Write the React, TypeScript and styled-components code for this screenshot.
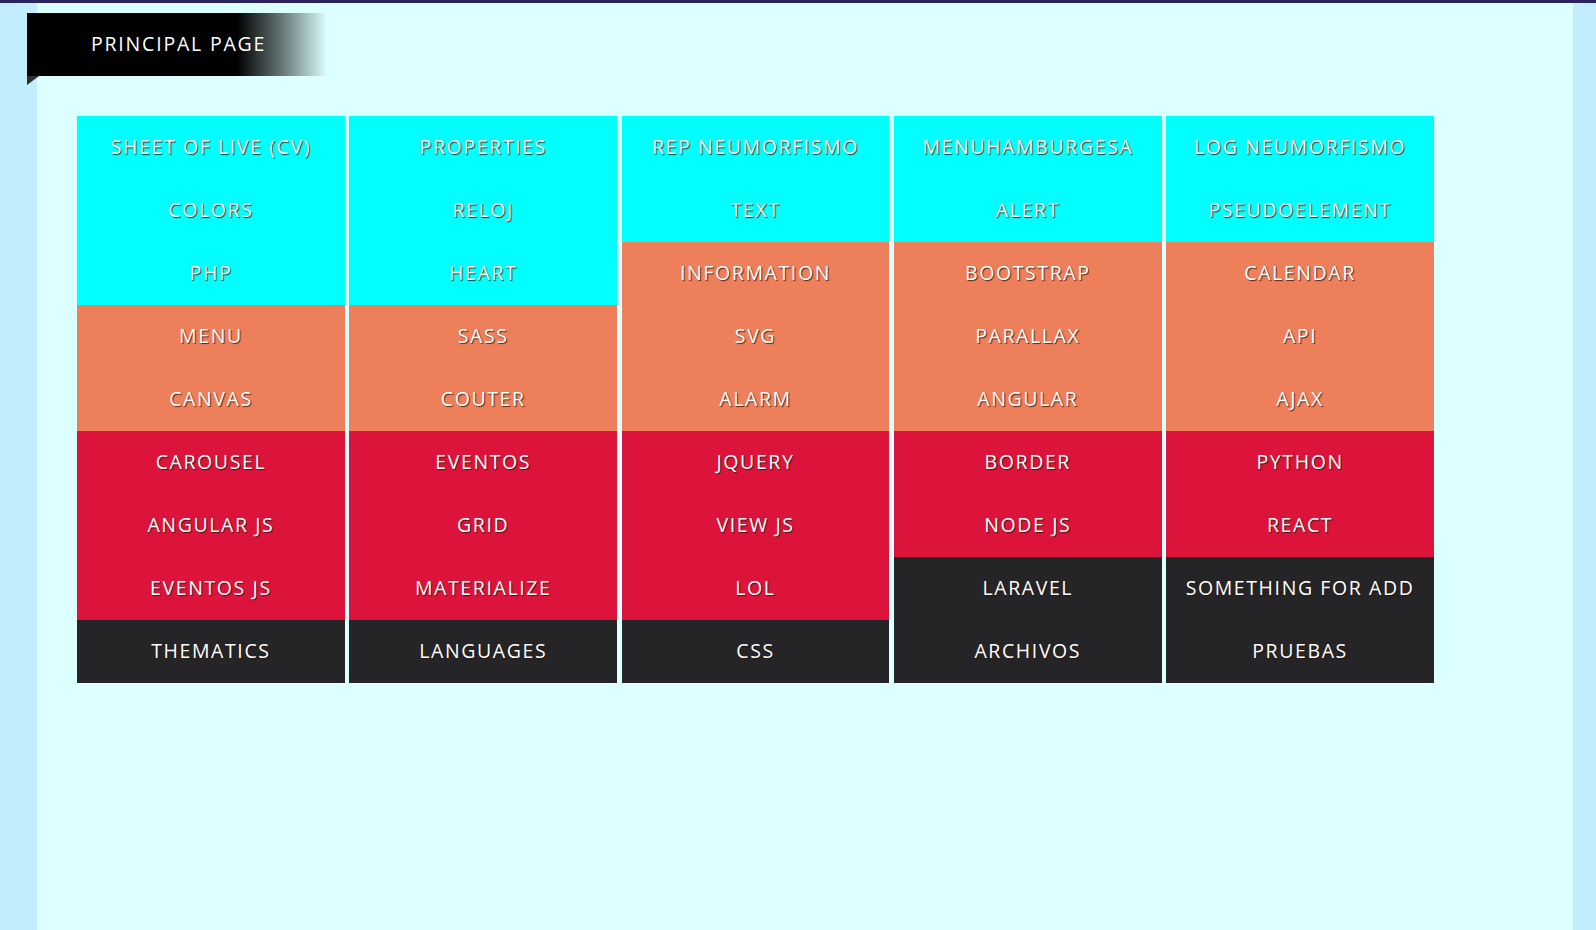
import React from "react";
import styled, { createGlobalStyle } from "styled-components";

const Global = createGlobalStyle`
  html, body { margin: 0; padding: 0; }
  body {
    background: #c1edfc;
    border-top: 3px solid #2b2360;
    font-family: "Open Sans", "Noto Sans", sans-serif;
    min-height: 927px;
  }
`;

const Page = styled.div`
  margin-left: 37px;
  width: 1536px;
  min-height: 927px;
  background: #dcffff;
  padding-top: 10px;
  box-sizing: border-box;
`;

const Ribbon = styled.div`
  position: relative;
  margin-left: -10px;
  width: 300px;
  height: 63px;
  background: linear-gradient(to right, #000 70%, rgba(0, 0, 0, 0.5) 86%, rgba(0, 0, 0, 0) 100%);
  display: flex;
  align-items: center;
  padding: 0 0 2px 64px;
  box-sizing: border-box;
  color: #fff;
  font-size: 19.5px;
  font-weight: 500;
  letter-spacing: 1.8px;
  text-transform: uppercase;
  &::after {
    content: "";
    position: absolute;
    left: 0;
    top: 63px;
    border-top: 9px solid #2f2f2f;
    border-left: 12px solid transparent;
    width: 0;
    height: 0;
    transform: scaleX(-1);
    transform-origin: 6px 0;
  }
`;

const Grid = styled.div`
  display: flex;
  gap: 4.5px;
  margin: 40px 0 0 40px;
  align-items: flex-start;
`;

const Column = styled.ul`
  list-style: none;
  margin: 0;
  padding: 0;
  width: 267.8px;
  display: flex;
  flex-direction: column;
`;

const palette: Record<string, string> = {
  cyan: "#00ffff",
  coral: "#ee7f5b",
  red: "#dc143c",
  dark: "#252527",
};

const Item = styled.li<{ $tone: string }>`
  height: 63px;
  padding-bottom: 2px;
  box-sizing: border-box;
  display: flex;
  align-items: center;
  justify-content: center;
  background: ${(p) => palette[p.$tone]};
  color: #fff;
  font-size: 19.5px;
  font-weight: 500;
  letter-spacing: 1.6px;
  text-transform: uppercase;
  text-shadow: 1px 1px 1px rgba(40, 20, 10, 0.8);
`;

type Cell = [string, string];

const columns: Cell[][] = [
  [
    ["Sheet of live (CV)", "cyan"],
    ["Colors", "cyan"],
    ["PHP", "cyan"],
    ["Menu", "coral"],
    ["Canvas", "coral"],
    ["Carousel", "red"],
    ["Angular JS", "red"],
    ["Eventos JS", "red"],
    ["Thematics", "dark"],
  ],
  [
    ["Properties", "cyan"],
    ["Reloj", "cyan"],
    ["Heart", "cyan"],
    ["Sass", "coral"],
    ["Couter", "coral"],
    ["Eventos", "red"],
    ["Grid", "red"],
    ["Materialize", "red"],
    ["Languages", "dark"],
  ],
  [
    ["Rep Neumorfismo", "cyan"],
    ["Text", "cyan"],
    ["Information", "coral"],
    ["SVG", "coral"],
    ["Alarm", "coral"],
    ["JQuery", "red"],
    ["View JS", "red"],
    ["LOL", "red"],
    ["CSS", "dark"],
  ],
  [
    ["MenuHamburgesa", "cyan"],
    ["Alert", "cyan"],
    ["Bootstrap", "coral"],
    ["Parallax", "coral"],
    ["Angular", "coral"],
    ["Border", "red"],
    ["Node JS", "red"],
    ["Laravel", "dark"],
    ["Archivos", "dark"],
  ],
  [
    ["Log Neumorfismo", "cyan"],
    ["Pseudoelement", "cyan"],
    ["Calendar", "coral"],
    ["API", "coral"],
    ["AJAX", "coral"],
    ["Python", "red"],
    ["React", "red"],
    ["Something for add", "dark"],
    ["Pruebas", "dark"],
  ],
];

export default function App() {
  return (
    <>
      <Global />
      <Page>
        <Ribbon>Principal Page</Ribbon>
        <Grid>
          {columns.map((col, i) => (
            <Column key={i}>
              {col.map(([label, tone]) => (
                <Item key={label} $tone={tone}>
                  {label}
                </Item>
              ))}
            </Column>
          ))}
        </Grid>
      </Page>
    </>
  );
}
